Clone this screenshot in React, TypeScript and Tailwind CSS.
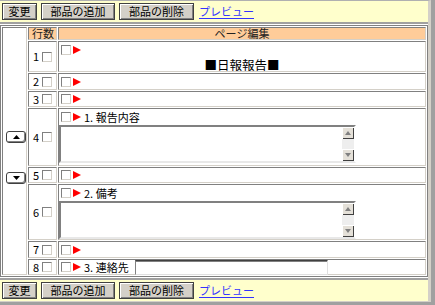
import type { ReactNode } from 'react';

const cell =
  'border border-t-[#808080] border-l-[#808080] border-r-[#d4d0c8] border-b-[#d4d0c8]';

function Btn({ w, children }: { w: string; children: ReactNode }) {
  return (
    <div
      className={`${w} h-[17px] flex items-center justify-center bg-[#d4d0c8] border border-[#404040] shadow-[inset_1px_1px_0_#ffffff,inset_-1px_-1px_0_#808080] text-[11px] text-black`}
    >
      {children}
    </div>
  );
}

function Toolbar() {
  return (
    <div className="h-[21px] shrink-0 bg-[#ffffcc] flex items-center gap-[4px] pl-[2px]">
      <Btn w="w-[35px]">変更</Btn>
      <Btn w="w-[74px]">部品の追加</Btn>
      <Btn w="w-[75px]">部品の削除</Btn>
      <a href="#" className="ml-px text-[#3333ff] underline underline-offset-2">
        プレビュー
      </a>
    </div>
  );
}

function Check() {
  return (
    <span className="inline-block w-[10px] h-[10px] shrink-0 bg-white border border-t-[#808080] border-l-[#808080] border-r-[#d4d0c8] border-b-[#d4d0c8]" />
  );
}

function Tri() {
  return (
    <svg width="8" height="8" viewBox="0 0 8 8" className="shrink-0">
      <polygon points="0,0 8,4 0,8" fill="#ff0000" />
    </svg>
  );
}

function Lead({ label, children }: { label?: string; children?: ReactNode }) {
  return (
    <div className="h-[12px] flex items-center gap-[2px] pl-[2px]">
      <Check />
      <Tri />
      {label && <span className="ml-px whitespace-nowrap">{label}</span>}
      {children}
    </div>
  );
}

function ScrollBtn({ up }: { up?: boolean }) {
  return (
    <div className="h-[12px] flex items-center justify-center bg-[#e4e0d8] shadow-[inset_1px_1px_0_#ffffff,inset_-1px_-1px_0_#404040]">
      <svg width="6" height="4" viewBox="0 0 6 4">
        <polygon points={up ? '0,4 6,4 3,0' : '0,0 6,0 3,4'} fill="#808080" />
      </svg>
    </div>
  );
}

function TextArea() {
  return (
    <div className="w-[297px] h-[38px] flex border-2 border-t-[#808080] border-l-[#808080] border-r-[#ffffff] border-b-[#e8e8e8] shadow-[inset_1px_1px_0_#404040]">
      <div className="flex-1 bg-white" />
      <div className="w-[12px] flex flex-col">
        <ScrollBtn up />
        <div className="flex-1 bg-[#eeeeee]" />
        <ScrollBtn />
      </div>
    </div>
  );
}

function Num({ n }: { n: number }) {
  return (
    <div className={`${cell} bg-white flex items-center justify-center gap-[3px]`}>
      <span>{n}</span>
      <Check />
    </div>
  );
}

function MoveBtn({ up }: { up?: boolean }) {
  return (
    <div className="w-[20px] h-[12px] ml-[3px] flex items-center justify-center rounded-[3px] border border-[#404040] bg-white shadow-[inset_-1px_-1px_0_#808080]">
      <svg width="7" height="4" viewBox="0 0 7 4">
        <polygon points={up ? '0,4 7,4 3.5,0' : '0,0 7,0 3.5,4'} fill="#000000" />
      </svg>
    </div>
  );
}

export default function App() {
  return (
    <div className="w-[435px] h-[305px] bg-white border-r-[4px] border-b-[3px] border-[#a0a0a0] text-[11px] leading-none text-black font-['Noto_Sans_CJK_JP','Noto_Sans',sans-serif]">
      <div className="h-full flex flex-col border-t border-r-[3px] border-b border-t-[#b0b0b0] border-r-[#d4d0c8] border-b-[#d4d0c8]">
        <Toolbar />
        <div className="h-[2px] shrink-0 bg-[#a0a0a0]" />
        <div className="h-px shrink-0" />

        <div className="h-[252px] shrink-0 grid grid-cols-[25px_29px_1fr] grid-rows-[13px_31px_17px_16px_58px_16px_56px_17px_16px] gap-px p-px border border-[#808080]">
          <div className={`${cell} row-span-9 bg-white flex flex-col pt-[103px]`}>
            <MoveBtn up />
            <div className="mt-[29px]">
              <MoveBtn />
            </div>
          </div>
          <div className={`${cell} bg-[#ffcc99] flex items-center pl-[3px] text-[#222]`}>行数</div>
          <div className={`${cell} bg-[#ffcc99] flex items-center justify-center text-[#222]`}>
            ページ編集
          </div>

          <Num n={1} />
          <div className={`${cell} bg-white flex flex-col pt-[2px]`}>
            <Lead />
            <div className="mt-[3px] text-center text-[12.5px]">■日報報告■</div>
          </div>

          <Num n={2} />
          <div className={`${cell} bg-white flex items-center`}>
            <Lead />
          </div>

          <Num n={3} />
          <div className={`${cell} bg-white flex items-center`}>
            <Lead />
          </div>

          <Num n={4} />
          <div className={`${cell} bg-white flex flex-col pt-[2px]`}>
            <Lead label="1. 報告内容" />
            <div className="mt-[2px]">
              <TextArea />
            </div>
          </div>

          <Num n={5} />
          <div className={`${cell} bg-white flex items-center`}>
            <Lead />
          </div>

          <Num n={6} />
          <div className={`${cell} bg-white flex flex-col pt-[2px]`}>
            <Lead label="2. 備考" />
            <div className="mt-[2px]">
              <TextArea />
            </div>
          </div>

          <Num n={7} />
          <div className={`${cell} bg-white flex items-center`}>
            <Lead />
          </div>

          <Num n={8} />
          <div className={`${cell} bg-white flex items-center`}>
            <Lead label="3. 連絡先">
              <div className="ml-[4px] w-[193px] h-[15px] bg-white border border-t-[#404040] border-l-[#808080] border-r-[#e0e0e0] border-b-[#e0e0e0] shadow-[inset_0_1px_0_#808080]" />
            </Lead>
          </div>
        </div>

        <div className="h-px shrink-0" />
        <div className="h-[2px] shrink-0 bg-[#a0a0a0]" />
        <Toolbar />
      </div>
    </div>
  );
}
